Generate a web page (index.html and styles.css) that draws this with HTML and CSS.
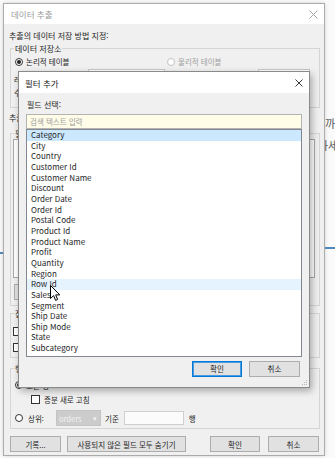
FILE: index.html
```html
<!DOCTYPE html>
<html lang="ko">
<head>
<meta charset="UTF-8">
<title>데이터 추출</title>
<link rel="stylesheet" href="styles.css">
</head>
<body>
<div class="screen">
  <div class="side side-left">
    <div class="side-rule"></div>
  </div>

  <div class="window">
    <div class="titlebar">
      <span class="title">데이터 추출</span>
      <svg class="close close-light" width="9" height="9" viewBox="0 0 9 9"><path d="M0.5 0.5L8.5 8.5M8.5 0.5L0.5 8.5"/></svg>
    </div>

    <div class="window-body">
      <p class="lead">추출의 데이터 저장 방법 지정:</p>
      <fieldset class="group group-store">
        <legend>데이터 저장소</legend>
        <div class="choice-row">
          <label class="choice choice-wide"><span class="radio checked"></span>논리적 테이블</label>
          <label class="choice disabled"><span class="radio"></span>물리적 테이블</label>
        </div>
        <div class="store-extra">
          <p class="note">레<br>수</p>
          <span class="field field-a"></span>
          <span class="field field-b"></span>
        </div>
      </fieldset>

      <p class="lead lead-second">추출할 데이터 양 지정:</p>
      <fieldset class="group group-filters">
        <legend class="legend-cut">필</legend>
        <div class="filter-table"></div>
        <!-- add / edit / remove buttons sit behind the picker -->
        <div class="button-row">
          <span class="btn"></span>
          <span class="btn"></span>
          <span class="btn"></span>
        </div>
      </fieldset>

      <fieldset class="group group-agg">
        <legend class="legend-cut">집</legend>
        <span class="checkbox check-first"></span>
        <span class="checkbox check-second"></span>
      </fieldset>

      <fieldset class="group group-rows">
        <legend class="legend-cut">행</legend>
        <label class="choice rows-all"><span class="radio checked"></span>모든 행</label>
        <label class="choice rows-incremental"><span class="checkbox"></span>증분 새로 고침</label>
        <div class="rows-top">
          <label class="choice"><span class="radio"></span>상위:</label>
          <span class="dropdown">orders<span class="dropdown-arrow">▾</span></span>
          <span>기준</span>
          <span class="count-box"></span>
          <span>행</span>
        </div>
      </fieldset>

      <div class="footer">
        <button class="btn">기록...</button>
        <button class="btn btn-long">사용되지 않은 필드 모두 숨기기</button>
        <button class="btn btn-ok">확인</button>
        <button class="btn">취소</button>
      </div>
    </div>
  </div>

  <div class="side side-right">
    <p class="bg-text">까</p>
    <p class="bg-text bg-text-cut">하세</p>
    <div class="side-rule side-rule-right"></div>
  </div>

  <!-- 필터 추가 dialog floats above the extract dialog -->
  <div class="picker">
    <div class="picker-titlebar">
      <span class="picker-title">필터 추가</span>
      <svg class="close" width="8" height="8" viewBox="0 0 8 8"><path d="M0.5 0.5L7.5 7.5M7.5 0.5L0.5 7.5"/></svg>
    </div>
    <div class="picker-body">
      <p class="picker-label">필드 선택:</p>
      <input class="search" type="text" placeholder="검색 텍스트 입력">
      <ul class="field-list">
        <li class="selected">Category</li>
        <li>City</li>
        <li>Country</li>
        <li>Customer Id</li>
        <li>Customer Name</li>
        <li>Discount</li>
        <li>Order Date</li>
        <li>Order Id</li>
        <li>Postal Code</li>
        <li>Product Id</li>
        <li>Product Name</li>
        <li>Profit</li>
        <li>Quantity</li>
        <li>Region</li>
        <li class="hover">Row Id</li>
        <li>Sales</li>
        <li>Segment</li>
        <li>Ship Date</li>
        <li>Ship Mode</li>
        <li>State</li>
        <li>Subcategory</li>
      </ul>
      <div class="picker-buttons">
        <button class="btn btn-default">확인</button>
        <button class="btn">취소</button>
      </div>
    </div>
    <svg class="grip" width="6" height="6" viewBox="0 0 6 6"><path d="M5 1h1v1H5zM3 3h1v1H3zM5 3h1v1H5zM1 5h1v1H1zM3 5h1v1H3zM5 5h1v1H5z"/></svg>
  </div>

  <svg class="cursor" width="11" height="17" viewBox="0 0 11 17"><path d="M0.5 0.5V13.5L3.6 10.6L5.6 15.4L7.6 14.5L5.7 9.9H9.8Z"/></svg>
</div>
</body>
</html>
```

FILE: styles.css
```css
* {
    margin: 0;
    padding: 0;
    box-sizing: border-box;
}

body {
    width: 335px;
    height: 458px;
    overflow: hidden;
    background: #fafafa;
    font-family: "Noto Sans CJK KR", "Noto Sans", sans-serif;
    font-size: 7.5px;
    color: #1e1e1e;
}

.screen {
    position: relative;
    display: flex;
    height: 458px;
}

/* page behind the dialog */
.side {
    flex: none;
    overflow: hidden;
}

.side-left {
    width: 3px;
    padding-top: 252px;
}

.side-right {
    flex: 1;
    padding-top: 116px;
}

.side-rule {
    height: 2px;
    background: #5289bd;
}

.side-rule-right {
    margin-top: 95px;
}

.bg-text {
    font-size: 11px;
    line-height: 14px;
    color: #555;
    white-space: nowrap;
}

.bg-text-cut {
    margin-top: 8px;
    margin-left: -7px;
}

/* extract dialog */
.window {
    flex: none;
    width: 322px;
    height: 453px;
    margin-top: 3px;
    border: 1px solid #ababab;
    background: #f0f0f0;
    box-shadow: 0 0 4px rgba(0, 0, 0, 0.15);
}

.titlebar {
    height: 20px;
    background: #fff;
    display: flex;
    align-items: center;
    justify-content: space-between;
    padding: 0 6px 0 7px;
}

.title {
    font-size: 8.5px;
    color: #9a9a9a;
}

.close {
    stroke: #222;
    stroke-width: 0.9;
    fill: none;
}

.close-light {
    stroke: #9a9a9a;
}

.window-body {
    padding: 6px 4px 0 5px;
}

.lead {
    font-size: 8px;
    line-height: 11px;
}

.lead-second {
    margin-top: 4px;
}

.group {
    border: 1px solid #d5d5d5;
    margin: 2px 0 0 1px;
    padding: 0 3px 5px;
    min-width: 0;
}

.group legend {
    padding: 0 1px;
    line-height: 11px;
    font-size: 8px;
}

/* legends that run under the picker are clipped at its edge */
.group .legend-cut {
    width: 4px;
    overflow: hidden;
    white-space: nowrap;
    padding-right: 0;
}

.choice {
    display: flex;
    align-items: center;
    gap: 3px;
    line-height: 11px;
    white-space: nowrap;
}

.choice.disabled {
    color: #a0a0a0;
}

.choice-row {
    display: flex;
    margin: 2px 0 0 1px;
}

.choice-wide {
    width: 152px;
}

.radio {
    width: 8px;
    height: 8px;
    border: 1px solid #333;
    border-radius: 50%;
    background: #fff;
    display: inline-flex;
    align-items: center;
    justify-content: center;
    flex: none;
}

.radio.checked::after {
    content: "";
    width: 4px;
    height: 4px;
    border-radius: 50%;
    background: #222;
}

.disabled .radio {
    border-color: #c2c2c2;
}

.checkbox {
    display: block;
    width: 9px;
    height: 9px;
    border: 1px solid #333;
    background: #fff;
    flex: none;
}

.store-extra {
    display: flex;
    align-items: flex-start;
    margin-top: 2px;
    height: 32.5px;
}

.note {
    width: 4px;
    margin-right: 70px;
    padding-top: 4px;
    line-height: 13px;
    white-space: nowrap;
    overflow: hidden;
}

.field {
    height: 15px;
    background: #fff;
    border: 1px solid #c8c8c8;
}

.field-a {
    width: 77px;
}

.field-b {
    width: 52px;
    margin-left: 93px;
}

.group-filters {
    margin-top: 5px;
}

.filter-table {
    height: 139px;
    margin: 0 1px 0 -1px;
    background: #fff;
    border: 1px solid #a9a9a9;
}

.button-row {
    display: flex;
    gap: 6px;
    margin-top: 6px;
}

.btn {
    display: block;
    width: 51px;
    height: 16px;
    border: 1px solid #adadad;
    background: #e1e1e1;
    font-family: inherit;
    font-size: 7.5px;
    color: #1e1e1e;
}

.group-agg {
    margin-top: 2px;
    padding-bottom: 4px;
}

.check-first {
    margin: 8px 0 0 -1px;
}

.check-second {
    margin: 7px 0 1px -1px;
}

.group-rows {
    margin-top: 5px;
    padding-bottom: 2px;
}

.rows-all {
    margin: 6px 0 0 1px;
}

.rows-incremental {
    margin: 3px 0 0 17px;
    gap: 4px;
}

.rows-top {
    display: flex;
    align-items: center;
    gap: 4px;
    height: 16px;
    margin: 5.5px 0 0 1px;
}

.rows-top .choice {
    gap: 5px;
    width: 37px;
}

.dropdown {
    width: 45px;
    height: 16px;
    background: #cccccc;
    border: 1px solid #c4c4c4;
    color: #f2f2f2;
    display: flex;
    align-items: center;
    justify-content: space-between;
    padding: 0 3px 0 2px;
}

.dropdown-arrow {
    font-size: 7px;
}

.count-box {
    width: 60px;
    height: 14px;
    margin: 0 1px;
    background: #fbfbfb;
    border: 1px solid #cfcfcf;
}

.footer {
    display: flex;
    gap: 6px;
    margin-top: 7px;
    padding: 0 1px;
}

.btn-long {
    width: 119px;
}

.btn-ok {
    margin-left: auto;
    margin-right: 2px;
    width: 50px;
}

/* add-filter dialog on top */
.picker {
    position: absolute;
    left: 18px;
    top: 71px;
    width: 292px;
    height: 317px;
    border: 1px solid #8a8a8a;
    background: #f0f0f0;
    box-shadow: 2px 3px 7px rgba(0, 0, 0, 0.3);
}

.picker-titlebar {
    height: 21px;
    background: #fff;
    display: flex;
    align-items: center;
    justify-content: space-between;
    padding: 0 6px 0 6px;
}

.picker-title {
    font-size: 8.5px;
    color: #222;
}

.picker-body {
    padding: 6px 7px 0;
}

.picker-label {
    padding-left: 1px;
    line-height: 11px;
    font-size: 8px;
}

.search {
    display: block;
    width: 100%;
    height: 15px;
    margin-top: 4px;
    padding-left: 3px;
    border: 1px solid #b4b4b4;
    background: #fffde8;
    font-family: inherit;
    font-size: 7.5px;
    outline: none;
}

.search::placeholder {
    color: #9c9c9c;
}

.field-list {
    list-style: none;
    border: 1px solid #828790;
    background: #fff;
    padding-bottom: 2px;
}

.field-list li {
    height: 10.67px;
    line-height: 10.67px;
    padding-left: 4px;
    font-size: 8px;
}

.field-list li.selected {
    background: #cce8ff;
}

.field-list li.hover {
    background: #e5f3ff;
}

.picker-buttons {
    display: flex;
    justify-content: flex-end;
    gap: 7px;
    margin-top: 4px;
    padding-right: 2px;
}

.btn-default {
    border-color: #0078d7;
    box-shadow: inset 0 0 0 1px #4a9be0;
    width: 50px;
}

.grip {
    position: absolute;
    right: 2px;
    bottom: 2px;
    fill: #b5b5b5;
}

.cursor {
    position: absolute;
    left: 50px;
    top: 285px;
    fill: #fff;
    stroke: #000;
    stroke-width: 1;
}
```
